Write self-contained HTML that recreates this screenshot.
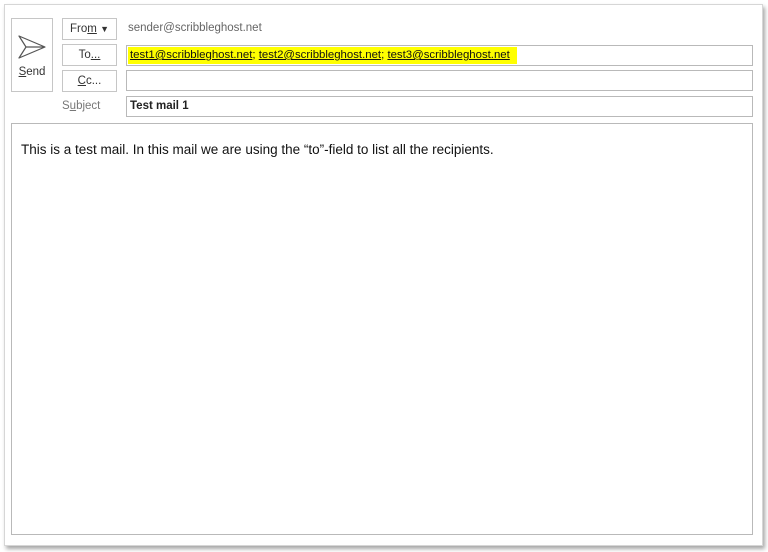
<!DOCTYPE html><html><head><style>
body{margin:0;width:768px;height:552px;background:#fff;font-family:"Liberation Sans",sans-serif;position:relative;overflow:hidden}
.a{position:absolute;box-sizing:border-box}
.frame{left:4px;top:4px;width:759px;height:542px;border:1px solid #d6d6d6;box-shadow:2px 3px 4px rgba(0,0,0,.35)}
.btn{border:1px solid #c6c6c6;background:#fff;font-size:11px;color:#333;text-align:center}
.fld{border:1px solid #b9b9b9;background:#fff}
u{text-decoration:underline}
</style></head><body>
<div class="a frame"></div>
<div class="a btn" style="left:11px;top:18px;width:42px;height:74px">
<svg width="30" height="26" style="position:absolute;left:5px;top:15px" viewBox="0 0 30 26"><path d="M2 2 L28 13 L2 24 L9 13 Z M9 13 H28" fill="none" stroke="#555" stroke-width="1.2" stroke-linejoin="round"/></svg>
<div style="position:absolute;top:47px;width:100%;font-size:11.5px"><u>S</u>end</div></div>
<div class="a btn" style="left:62px;top:18px;width:55px;height:22px;line-height:20px;font-size:11.5px">Fro<u>m</u> <span style="font-size:9px">&#9660;</span></div>
<div class="a btn" style="left:62px;top:44px;width:55px;height:22px;line-height:20px;font-size:11.5px">To<u>...</u></div>
<div class="a btn" style="left:62px;top:70px;width:55px;height:22px;line-height:20px;font-size:11.5px"><u>C</u>c...</div>
<div class="a" style="left:128px;top:22px;font-size:11.5px;color:#666">sender@scribbleghost.net</div>
<div class="a" style="left:62px;top:100px;font-size:11.5px;color:#777">S<u>u</u>bject</div>
<div class="a fld" style="left:126px;top:45px;width:627px;height:21px"></div>
<div class="a" style="left:128px;top:47px;width:389px;height:17px;background:#ffff00;font-size:11.4px;line-height:17px;padding-left:2px;color:#111;white-space:nowrap"><u>test1@scribbleghost.net</u>; <u>test2@scribbleghost.net</u>; <u>test3@scribbleghost.net</u></div>
<div class="a fld" style="left:126px;top:70px;width:627px;height:21px"></div>
<div class="a fld" style="left:126px;top:96px;width:627px;height:21px;font-size:11.5px;font-weight:bold;line-height:19px;padding-left:3px;color:#222">Test mail 1</div>
<div class="a fld" style="left:11px;top:123px;width:742px;height:412px"></div>
<div class="a" style="left:21px;top:142px;font-size:13.5px;color:#111">This is a test mail. In this mail we are using the “to”-field to list all the recipients.</div>
</body></html>
